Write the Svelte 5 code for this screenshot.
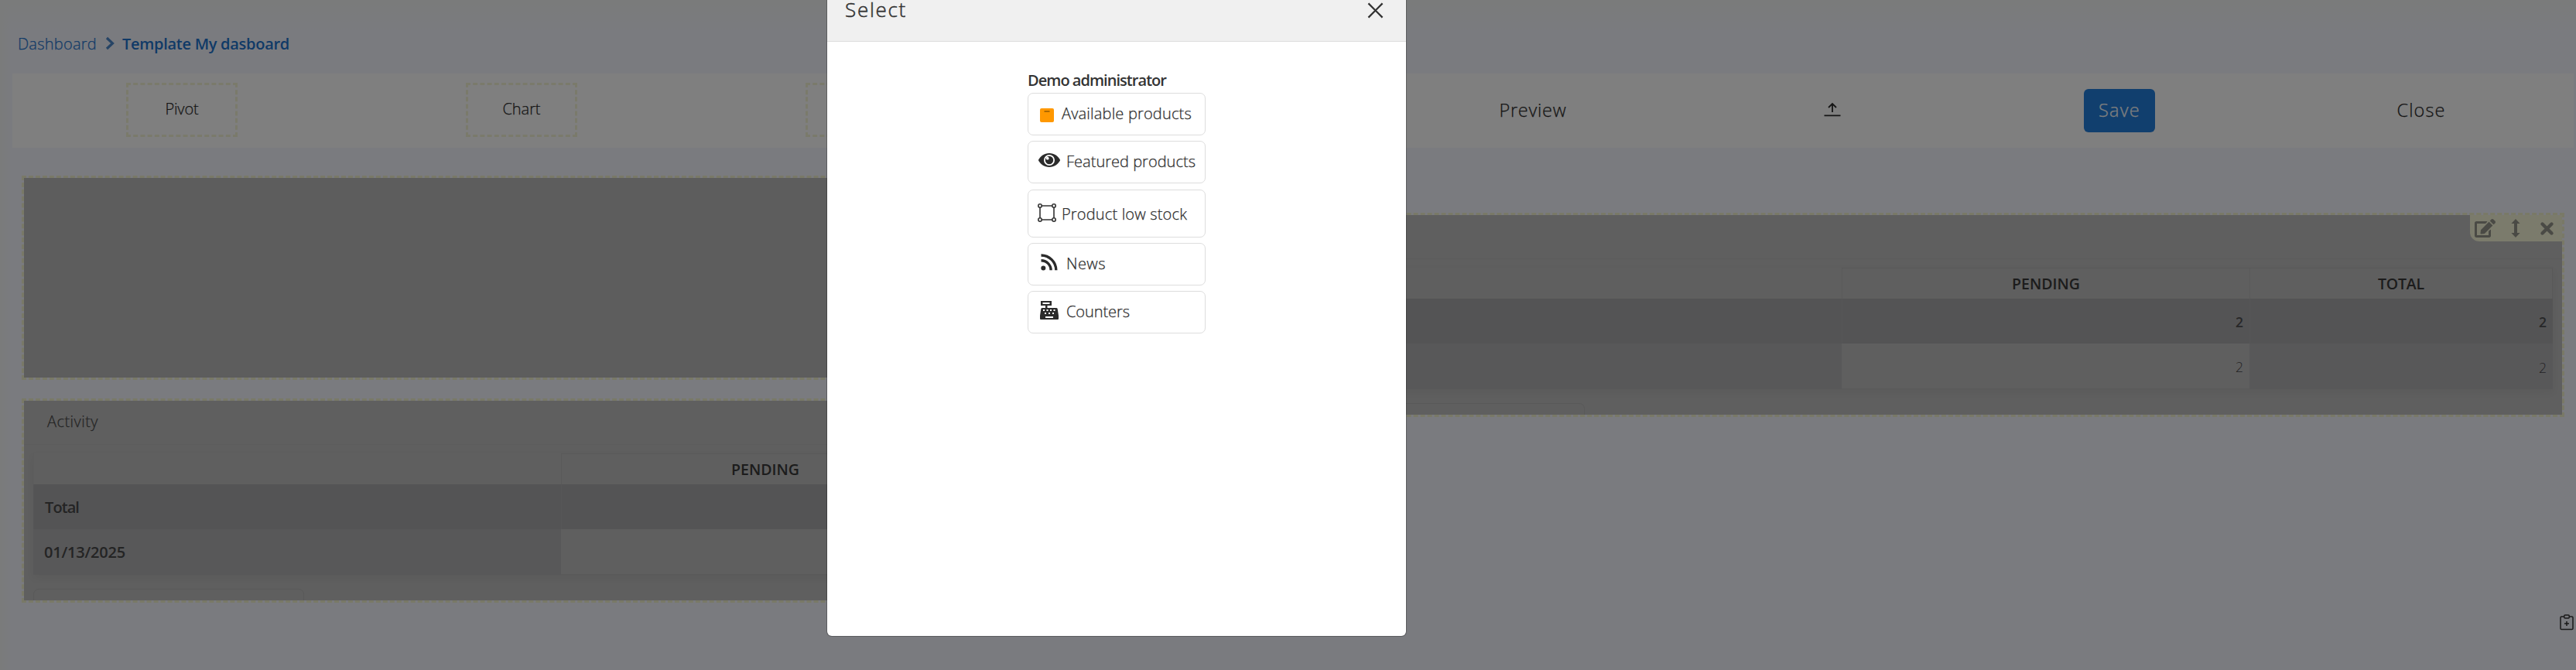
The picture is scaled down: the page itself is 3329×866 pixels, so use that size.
<script>
  // Spreads the glyphs of a label so that it occupies the given width.
  function fit(node, width) {
    const natural = node.getBoundingClientRect().width;
    const count = node.textContent.length;
    node.style.letterSpacing = `${(width - natural) / count}px`;
  }

  const tools = [
    { label: 'Pivot', width: 43 },
    { label: 'Chart', width: 49 },
    { label: '' },
    { label: '' }
  ];
  const widgets = [
    { label: 'Available products', icon: 'box', width: 168 },
    { label: 'Featured products', icon: 'eye', width: 167 },
    { label: 'Product low stock', icon: 'frame', width: 162 },
    { label: 'News', icon: 'rss', width: 51 },
    { label: 'Counters', icon: 'register', width: 82 }
  ];
</script>

{#snippet activity(title)}
  <div class="title">{#if title}<span use:fit={66}>{title}</span>{/if}</div>
  <div class="table">
    <div class="cell blank"></div>
    <div class="cell head"><span use:fit={88}>PENDING</span></div>
    <div class="cell head">{#if !title}<span use:fit={60}>TOTAL</span>{/if}</div>
    <div class="cell sum name">{#if title}<span use:fit={44}>Total</span>{/if}</div>
    <div class="cell sum num">{title ? '' : '2'}</div>
    <div class="cell sum num">{title ? '' : '2'}</div>
    <div class="cell day name">{#if title}<span use:fit={105}>01/13/2025</span>{/if}</div>
    <div class="cell value num">{title ? '' : '2'}</div>
    <div class="cell day num">{title ? '' : '2'}</div>
  </div>
  <div class="footbox"></div>
{/snippet}

<div class="page">
  <nav class="crumbs">
    <span use:fit={102}>Dashboard</span>
    <svg class="chev" viewBox="0 0 12 18"><path d="M2 2l7.5 7L2 16" fill="none" stroke="currentColor" stroke-width="3.2" /></svg>
    <b use:fit={216}>Template My dasboard</b>
  </nav>

  <div class="toolbar">
    {#each tools as tool}
      <div class="slot"><div class="drag">{#if tool.label}<span use:fit={tool.width}>{tool.label}</span>{/if}</div></div>
    {/each}
    <div class="slot big"><span use:fit={87}>Preview</span></div>
    <div class="slot">
      <svg class="upload" viewBox="0 0 22 18"><path d="M11 12V1M6 6l5-5 5 5M.5 16.4h21" fill="none" stroke="currentColor" stroke-width="1.8" /></svg>
    </div>
    <div class="slot big"><div class="save"><span use:fit={54}>Save</span></div></div>
    <div class="slot big"><span use:fit={63}>Close</span></div>
  </div>

  <div class="board">
    <div class="column">
      <section class="panel empty"></section>
      <section class="panel">{@render activity('Activity')}</section>
    </div>
    <div class="column second">
      <section class="panel">
        {@render activity('')}
        <div class="actions">
          <svg class="edit" viewBox="0 0 576 512"><path fill="currentColor" d="M402.6 83.2l90.2 90.2c3.8 3.8 3.8 10 0 13.8L274.4 405.6l-92.8 10.3c-12.4 1.4-22.9-9.1-21.5-21.5l10.3-92.8L388.8 83.2c3.8-3.8 10-3.8 13.8 0zm162-22.9l-48.8-48.8c-15.2-15.2-39.9-15.2-55.2 0l-35.4 35.4c-3.8 3.8-3.8 10 0 13.8l90.2 90.2c3.8 3.8 10 3.8 13.8 0l35.4-35.4c15.2-15.3 15.2-40 0-55.2zM384 346.2V448H64V128h229.8c3.2 0 6.2-1.3 8.5-3.5l40-40c7.6-7.6 2.2-20.5-8.5-20.5H48C21.5 64 0 85.5 0 112v352c0 26.5 21.5 48 48 48h352c26.5 0 48-21.5 48-48V306.2c0-10.7-12.9-16-20.5-8.5l-40 40c-2.2 2.3-3.5 5.3-3.5 8.5z" /></svg>
          <svg class="move" viewBox="0 0 12 24"><path fill="currentColor" d="M6 0l5.6 6H8v12h3.6L6 24 .4 18H4V6H.4z" /></svg>
          <svg class="remove" viewBox="0 0 17 17"><path d="M2.5 2.5l12 12m0-12l-12 12" stroke="currentColor" stroke-width="4.4" stroke-linecap="round" /></svg>
        </div>
      </section>
    </div>
  </div>

  <svg class="clip" viewBox="0 0 18 21"><g fill="none" stroke="currentColor" stroke-width="1.5"><path d="M5 3H2.3Q1 3 1 4.3v14Q1 19.6 2.3 19.6h13.4Q17 19.6 17 18.3v-14Q17 3 15.7 3H13M9 9v6M6 12h6" /><rect x="5.8" y="1" width="6.4" height="4" rx="1" /></g></svg>

  <div class="overlay">
    <div class="modal">
      <header>
        <span use:fit={80}>Select</span>
        <svg viewBox="0 0 22 22"><path d="M1.5 1.5l19 19m0-19l-19 19" stroke="currentColor" stroke-width="2.4" /></svg>
      </header>
      <div class="list">
        <b class="owner" use:fit={179}>Demo administrator</b>
        {#each widgets as w}
          <button class={w.icon}>
            {#if w.icon === 'box'}
              <svg viewBox="0 0 18 18"><rect width="18" height="18" rx="2" fill="#ff9800" /><path d="M5.5 4h7" stroke="#7a4a00" stroke-width="1.2" /></svg>
            {:else if w.icon === 'eye'}
              <svg viewBox="0 0 28 18"><path fill="#2b2b2b" d="M14 0C7.5 0 2.5 4 .2 8.3a1.5 1.5 0 0 0 0 1.4C2.5 14 7.5 18 14 18s11.5-4 13.8-8.3a1.5 1.5 0 0 0 0-1.4C25.5 4 20.5 0 14 0z" /><circle cx="14" cy="9" r="6.1" fill="none" stroke="#fff" stroke-width="1.8" /><circle cx="11.7" cy="6.7" r="1.9" fill="#fff" /></svg>
            {:else if w.icon === 'frame'}
              <svg viewBox="0 0 24 24"><g fill="none" stroke="#333" stroke-width="1.6"><path d="M5 3h14M5 21h14M3 5v14M21 5v14" /><circle cx="3" cy="3" r="2.2" /><circle cx="21" cy="3" r="2.2" /><circle cx="3" cy="21" r="2.2" /><circle cx="21" cy="21" r="2.2" /></g></svg>
            {:else if w.icon === 'rss'}
              <svg viewBox="0 0 22 22"><circle cx="3.3" cy="18.5" r="3" fill="#2b2b2b" /><path d="M.5 8.7a12.6 12.6 0 0 1 12.6 12.6M.5 2a19.3 19.3 0 0 1 19.3 19.3" fill="none" stroke="#2b2b2b" stroke-width="3.4" /></svg>
            {:else}
              <svg viewBox="0 0 24 24"><path fill="#2b2b2b" fill-rule="evenodd" d="M1 0h14v6H9.5v3H21q1.5 0 1.7 1.3L24 19v4q0 1-1 1H1q-1 0-1-1v-4l1.3-8.7Q1.5 9 3 9h4V6H1zM3.5 2v2h9V2zM4 11v2h2v-2zm4.5 0v2h2v-2zm4.5 0v2h2v-2zm4.500 0v2h2v-2zM6 15v2h2v-2zm5 0v2h2v-2zm5 0v2h2v-2zM7 20v2h10v-2z" /></svg>
            {/if}
            <span use:fit={w.width}>{w.label}</span>
          </button>
        {/each}
      </div>
    </div>
  </div>
</div>

<style>
  :global(body) { margin: 0; overflow: hidden; }
  .page, .page * { box-sizing: border-box; }
  .page {
    position: relative;
    height: 866px;
    overflow: hidden;
    background: linear-gradient(#f4f6f6, rgba(245, 246, 254, 0) 40px), linear-gradient(90deg, #f4f6f6, #f5f6fe 14px);
    font: 300 20px/24px 'Open Sans', sans-serif;
    color: #2b2b2b;
  }
  span, b { display: inline-block; white-space: nowrap; }
  span { -webkit-text-stroke: .25px currentColor; }
  svg { display: block; flex: none; overflow: visible; }

  .crumbs { display: flex; height: 95px; padding: 45px 0 0 23px; color: #1f75cf; }
  .crumbs b { font-weight: 600; color: #1f75cf; }
  .chev { width: 12px; height: 18px; margin: 2px 10px 0 11px; color: #4c88cb; }

  .toolbar {
    display: grid;
    grid-template-columns: 438px 440px 438px 440px 418px 356px 386px 394px;
    width: 3310px;
    height: 96px;
    margin-left: 16px;
    background: #fff;
  }
  .slot { display: flex; align-items: center; justify-content: center; }
  .drag {
    display: flex;
    align-items: center;
    justify-content: center;
    width: 144px;
    height: 70px;
    margin-bottom: 2px;
    padding-bottom: 2px;
    border: 3px dashed #f5f5d6;
  }
  .big { font-size: 23.5px; padding-bottom: 2px; }
  .upload { width: 22px; height: 18px; margin-bottom: 2px; }
  .save { width: 92px; height: 56px; margin-top: 2px; padding-top: 15px; border-radius: 6px; background: #227edc; color: #fff; text-align: center; }

  .board { display: flex; gap: 24px; padding: 36px 15px 0 28px; }
  .column { display: flex; flex: none; flex-direction: column; gap: 24px; width: 1631px; }
  .second { padding-top: 48px; }
  .panel { position: relative; height: 264px; overflow: hidden; border: 3px dashed #f3f3cf; background: #bebebe padding-box; }
  .empty { background-color: #bababa; }
  .title { height: 57px; padding: 15px 0 0 30px; border-bottom: 1px solid #b9b9b9; color: #4a4a4a; }
  .table {
    display: grid;
    grid-template-columns: 682px 527px 392px;
    grid-template-rows: 40px 58px 59px;
    width: 1601px;
    margin: 11px 0 0 12px;
    box-shadow: 0 4px 10px rgba(0, 0, 0, .05);
  }
  .cell { display: flex; align-items: center; border-left: 1px solid #b4b4b4; }
  .head { justify-content: center; border-top: 1px solid #b2b2b2; font-size: 19.5px; font-weight: 600; color: #383838; }
  .head + .head { border-right: 1px solid #b2b2b2; }
  .cell span { -webkit-text-stroke: 0; }
  .blank { border-left-color: #bababa; }
  .sum { background: #a8a8ab; border-color: #acacaf; font-weight: 600; color: #505052; }
  .day { background: #b0b0b3; border-left: 0; color: #464648; }
  .value { border-left: 0; border-bottom: 1px solid #b4b4b4; color: #464648; }
  .name { padding-left: 14px; padding-top: 1px; font-weight: 600; color: #484849; }
  .num { justify-content: flex-end; padding: 2px 8px 0 0; font-size: 17.5px; }
  .footbox { width: 350px; height: 40px; margin: 18px 0 0 12px; border: 1px solid #b2b2b2; border-radius: 7px; }
  .actions {
    position: absolute;
    top: 0;
    right: 0;
    display: flex;
    align-items: flex-start;
    width: 119px;
    height: 34px;
    padding: 5px 0 0 6px;
    border-bottom-left-radius: 12px;
    background: #f6f6d8;
    color: #94948a;
  }
  .edit { width: 27px; height: 24px; }
  .move { width: 12px; height: 24px; margin-left: 20px; }
  .remove { width: 17px; height: 17px; margin: 4px 0 0 26px; }
  .clip { position: absolute; left: 3308px; top: 794px; width: 18px; height: 21px; color: #333; }

  .overlay { position: absolute; inset: 0; background: rgba(0, 0, 0, .5); }
  .modal {
    position: absolute;
    left: 1069px;
    top: -20px;
    width: 748px;
    height: 842px;
    overflow: hidden;
    border-radius: 0 0 6px 6px;
    background: #fff;
    box-shadow: 0 0 0 1px rgba(0, 0, 0, .25);
  }
  header {
    display: flex;
    align-items: flex-start;
    justify-content: space-between;
    height: 74px;
    padding: 20px 29px 0 23px;
    border-bottom: 1px solid #ddd;
    background: #f0f0f0;
    font-size: 26px;
    color: #333;
  }
  header span { -webkit-text-stroke: .5px currentColor; }
  header svg { width: 21px; height: 21px; margin-top: 3px; color: #333; }
  .list { display: flex; flex-direction: column; gap: 7px; width: 230px; margin: 38px 0 0 259px; }
  .owner { align-self: flex-start; font-weight: 600; color: #333; margin-bottom: -3px; }
  button {
    display: flex;
    align-items: flex-start;
    height: 55px;
    padding: 14px 0 0 15px;
    border: 1px solid #ddd;
    border-radius: 7px;
    background: #fff;
    font: inherit;
    color: #2b2b2b;
  }
  .box svg { width: 18px; height: 18px; margin: 5px 10px 0 0; }
  .eye { padding-left: 13px; }
  .eye svg { width: 28px; height: 18px; margin: 1px 8px 0 0; }
  .frame { height: 62px; padding: 19px 0 0 12px; margin-top: 1px; }
  .frame svg { width: 24px; height: 24px; margin: -2px 7px 0 0; }
  .rss { padding-left: 16px; }
  .rss svg { width: 22px; height: 22px; margin: -1px 11px 0 0; }
  .register svg { width: 24px; height: 24px; margin: -2px 10px 0 0; }
</style>
